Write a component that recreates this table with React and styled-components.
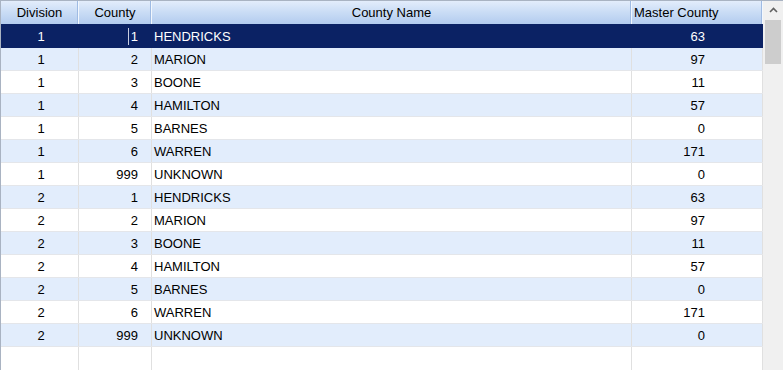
import styled, { createGlobalStyle } from "styled-components";

const GlobalStyle = createGlobalStyle`
    html, body {
        margin: 0;
        padding: 0;
        background: #fff;
    }
    body {
        font-family: "Liberation Sans", Arial, sans-serif;
        font-size: 13px;
    }
`;

const COLS = "78px 73px 480px 131px";

const Frame = styled.div`
    display: flex;
    width: 783px;
    height: 370px;
    box-sizing: border-box;
    border-top: 1px solid #a9b3c2;
    border-left: 1px solid #a9b3c2;
    overflow: hidden;
`;

const GridArea = styled.div`
    display: flex;
    flex-direction: column;
    width: 762px;
`;

const HeaderRow = styled.div`
    display: grid;
    grid-template-columns: ${COLS};
    height: 23px;
    border-bottom: 1px solid #0b2264;
    background: linear-gradient(to bottom, #e3edfb 0%, #c9dcf5 50%, #b3ccef 100%);
`;

const HeaderCell = styled.div`
    display: flex;
    align-items: center;
    justify-content: ${({ $align }) => ($align === "left" ? "flex-start" : "center")};
    padding-left: ${({ $align }) => ($align === "left" ? "2px" : "0")};
    color: #000;
    border-right: 1px solid #f2f7fd;
    box-shadow: inset -1px 0 0 #9fbbe3;
    white-space: nowrap;
`;

const Row = styled.div`
    display: grid;
    grid-template-columns: ${COLS};
    height: 22px;
    border-bottom: 1px solid ${({ $selected }) => ($selected ? "#0b2264" : "#e4e6ea")};
    background: ${({ $selected, $alt }) => ($selected ? "#0b2264" : $alt ? "#e2edfc" : "#fff")};
    color: ${({ $selected }) => ($selected ? "#fff" : "#000")};
`;

const Cell = styled.div`
    display: flex;
    align-items: center;
    justify-content: ${({ $align }) =>
        $align === "right" ? "flex-end" : $align === "left" ? "flex-start" : "center"};
    padding: ${({ $pad }) => $pad || "0"};
    padding-top: 1px;
    border-right: 1px solid ${({ $selected }) => ($selected ? "#0b2264" : "#e0e0e0")};
    white-space: nowrap;
    overflow: hidden;
`;

const Caret = styled.span`
    display: inline-block;
    width: 1px;
    height: 17px;
    background: #c8cde0;
    margin-right: 2px;
`;

const Filler = styled.div`
    flex: 1;
    display: grid;
    grid-template-columns: ${COLS};
`;

const FillerCell = styled.div`
    border-right: 1px solid #e0e0e0;
`;

const Scrollbar = styled.div`
    display: flex;
    flex-direction: column;
    width: 20px;
    background: #f0f0f0;
`;

const ArrowButton = styled.div`
    height: 18px;
    display: flex;
    align-items: center;
    justify-content: center;
`;

const Thumb = styled.div`
    margin: 1px 2px 0 2px;
    height: 44px;
    background: #cdcdcd;
`;

const rows = [
    [1, 1, "HENDRICKS", 63],
    [1, 2, "MARION", 97],
    [1, 3, "BOONE", 11],
    [1, 4, "HAMILTON", 57],
    [1, 5, "BARNES", 0],
    [1, 6, "WARREN", 171],
    [1, 999, "UNKNOWN", 0],
    [2, 1, "HENDRICKS", 63],
    [2, 2, "MARION", 97],
    [2, 3, "BOONE", 11],
    [2, 4, "HAMILTON", 57],
    [2, 5, "BARNES", 0],
    [2, 6, "WARREN", 171],
    [2, 999, "UNKNOWN", 0],
];

export default function App() {
    return (
        <>
            <GlobalStyle />
            <Frame>
                <GridArea>
                    <HeaderRow>
                        <HeaderCell>Division</HeaderCell>
                        <HeaderCell>County</HeaderCell>
                        <HeaderCell>County Name</HeaderCell>
                        <HeaderCell $align="left">Master County</HeaderCell>
                    </HeaderRow>
                    {rows.map(([div, county, name, master], i) => {
                        const selected = i === 0;
                        return (
                            <Row key={i} $selected={selected} $alt={i % 2 === 1}>
                                <Cell $selected={selected} $pad="0 0 0 3px">{div}</Cell>
                                <Cell $selected={selected} $align="right" $pad="0 13px 0 0">
                                    {selected && <Caret />}
                                    {county}
                                </Cell>
                                <Cell $selected={selected} $align="left" $pad="0 0 0 2px">{name}</Cell>
                                <Cell $selected={selected} $align="right" $pad="0 57px 0 0">{master}</Cell>
                            </Row>
                        );
                    })}
                    <Filler>
                        <FillerCell />
                        <FillerCell />
                        <FillerCell />
                        <FillerCell />
                    </Filler>
                </GridArea>
                <Scrollbar>
                    <ArrowButton>
                        <svg width="9" height="6" viewBox="0 0 9 6">
                            <path d="M1 5 L4.5 1.5 L8 5" fill="none" stroke="#606060" strokeWidth="1.6" />
                        </svg>
                    </ArrowButton>
                    <Thumb />
                </Scrollbar>
            </Frame>
        </>
    );
}
